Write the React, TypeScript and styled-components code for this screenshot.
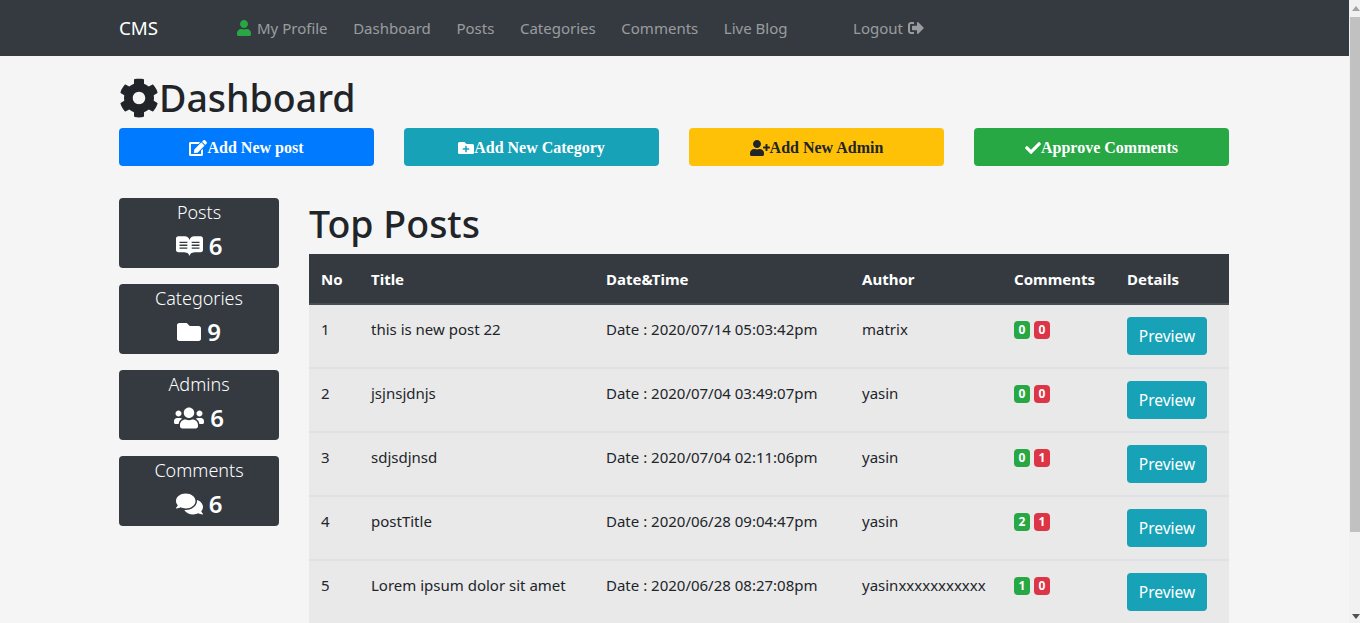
import React from "react";
import styled, { createGlobalStyle } from "styled-components";
import {
  FaCheck,
  FaCog,
  FaComments,
  FaEdit,
  FaFolder,
  FaFolderPlus,
  FaReadme,
  FaSignOutAlt,
  FaUser,
  FaUserPlus,
  FaUsers,
} from "react-icons/fa";

const GlobalStyle = createGlobalStyle`
  body {
    margin: 0;
    padding-right: 11px;
    background: #f5f5f5;
    color: #212529;
    font-family: "Noto Sans", "Open Sans", sans-serif;
    font-size: 15px;
    line-height: 24px;
  }
  svg {
    height: 1em;
    flex: none;
  }
`;

// font awesome glyphs are not square, react-icons squeezes them into 1em
const UserIcon = styled(FaUser)`
  width: 0.875em;
`;
const EditIcon = styled(FaEdit)`
  width: 1.125em;
`;
const UserPlusIcon = styled(FaUserPlus)`
  width: 1.25em;
`;
const BookIcon = styled(FaReadme)`
  width: 1.125em;
`;
const UsersIcon = styled(FaUsers)`
  width: 1.25em;
`;
const CommentsIcon = styled(FaComments)`
  width: 1.125em;
`;

const Navbar = styled.nav`
  background: #343a40;
  height: 56px;
`;

const NavInner = styled.div`
  width: 1110px;
  margin-left: 119px;
  height: 100%;
  display: flex;
  align-items: center;
`;

const Brand = styled.div`
  color: #fff;
  font-size: 18.75px;
  width: 118px;
`;

const NavLink = styled.a`
  color: rgba(255, 255, 255, 0.5);
  margin-right: 25.6px;
  display: flex;
  align-items: center;
  gap: 6px;
  svg {
    font-size: 16px;
  }
`;

const LogoutLink = styled(NavLink)`
  margin-left: 40px;
  gap: 5px;
`;

const Page = styled.main`
  width: 1110px;
  margin: 0 0 24px 119px;
`;

const Heading = styled.h1`
  margin: 18px 0 6px;
  font-size: 37.5px;
  line-height: 48px;
  font-weight: 500;
  display: flex;
  align-items: center;
  svg {
    font-size: 40px;
  }
`;

const ActionGrid = styled.div`
  display: grid;
  grid-template-columns: repeat(4, 255px);
  gap: 30px;
  margin-bottom: 32px;
`;

const ActionButton = styled.a<{ $bg: string; $fg: string }>`
  height: 38px;
  box-sizing: border-box;
  padding-top: 1px;
  border-radius: 4px;
  background: ${(p) => p.$bg};
  color: ${(p) => p.$fg};
  font-family: "Liberation Serif", serif;
  font-size: 16px;
  font-weight: 700;
  display: flex;
  align-items: center;
  justify-content: center;
`;

const Columns = styled.div`
  display: flex;
  gap: 30px;
  align-items: flex-start;
`;

const Sidebar = styled.aside`
  width: 160px;
  flex: none;
  display: flex;
  flex-direction: column;
  gap: 16px;
`;

const StatCard = styled.div`
  height: 70px;
  border-radius: 4px;
  background: #343a40;
  color: #fff;
  text-align: center;
`;

const StatLabel = styled.div`
  font-size: 18px;
  line-height: 29px;
  font-weight: 300;
`;

const StatValue = styled.div`
  font-size: 24px;
  line-height: 38px;
  font-weight: 600;
  display: flex;
  align-items: center;
  justify-content: center;
  gap: 6px;
`;

const Content = styled.section`
  flex: 1;
  min-width: 0;
`;

const SectionTitle = styled.h1`
  margin: 0 0 5px;
  font-size: 37.5px;
  line-height: 51px;
  font-weight: 500;
`;

const Table = styled.table`
  width: 920px;
  table-layout: fixed;
  border-collapse: separate;
  border-spacing: 0;
  background: #e9e9e9;
`;

const Th = styled.th<{ $w: number }>`
  width: ${(p) => p.$w}px;
  background: #343a40;
  color: #fff;
  text-align: left;
  padding: 12px;
  height: 51px;
  box-sizing: border-box;
  font-size: 15px;
  font-weight: 700;
  border-bottom: 2px solid #454d55;
`;

const Td = styled.td`
  padding: 12px;
  height: 64px;
  box-sizing: border-box;
  vertical-align: top;
  border-bottom: 2px solid #dee2e6;
  white-space: nowrap;
`;

const Badge = styled.span<{ $bg: string }>`
  display: inline-block;
  vertical-align: top;
  width: 16px;
  height: 18px;
  margin: 4px 4px 0 0;
  border-radius: 4px;
  background: ${(p) => p.$bg};
  color: #fff;
  font-size: 12px;
  line-height: 18px;
  font-weight: 700;
  text-align: center;
`;

const PreviewButton = styled.a`
  display: block;
  width: 80px;
  height: 38px;
  border-radius: 4px;
  background: #17a2b8;
  color: #fff;
  font-size: 15.5px;
  line-height: 38px;
  text-align: center;
`;

// the browser here draws no scrollbar, the reference has one
const ScrollTrack = styled.div`
  position: fixed;
  top: 0;
  right: 0;
  bottom: 0;
  width: 11px;
  background: #f1f1f1;
  display: flex;
  flex-direction: column;
  align-items: flex-end;
  justify-content: space-between;
`;

const ScrollThumb = styled.div`
  position: absolute;
  top: 17px;
  right: 0;
  width: 10px;
  height: 515px;
  background: #c1c1c1;
`;

const ScrollArrow = styled.svg`
  width: 8px;
  height: 5px;
  margin: 6px 0 4px;
`;

const posts = [
  { id: 1, title: "this is new post 22", date: "2020/07/14 05:03:42pm", author: "matrix", ok: 0, bad: 0 },
  { id: 2, title: "jsjnsjdnjs", date: "2020/07/04 03:49:07pm", author: "yasin", ok: 0, bad: 0 },
  { id: 3, title: "sdjsdjnsd", date: "2020/07/04 02:11:06pm", author: "yasin", ok: 0, bad: 1 },
  { id: 4, title: "postTitle", date: "2020/06/28 09:04:47pm", author: "yasin", ok: 2, bad: 1 },
  { id: 5, title: "Lorem ipsum dolor sit amet", date: "2020/06/28 08:27:08pm", author: "yasinxxxxxxxxxxx", ok: 1, bad: 0 },
];

const stats = [
  { label: "Posts", icon: <BookIcon />, value: 6 },
  { label: "Categories", icon: <FaFolder />, value: 9 },
  { label: "Admins", icon: <UsersIcon />, value: 6 },
  { label: "Comments", icon: <CommentsIcon />, value: 6 },
];

const App: React.FC = () => (
  <>
    <GlobalStyle />
    <Navbar>
      <NavInner>
        <Brand>CMS</Brand>
        <NavLink><UserIcon color="#28a745" />My Profile</NavLink>
        <NavLink>Dashboard</NavLink>
        <NavLink>Posts</NavLink>
        <NavLink>Categories</NavLink>
        <NavLink>Comments</NavLink>
        <NavLink>Live Blog</NavLink>
        <LogoutLink>Logout <FaSignOutAlt /></LogoutLink>
      </NavInner>
    </Navbar>
    <Page>
      <Heading><FaCog />Dashboard</Heading>
      <ActionGrid>
        <ActionButton $bg="#007bff" $fg="#fff"><EditIcon />Add New post</ActionButton>
        <ActionButton $bg="#17a2b8" $fg="#fff"><FaFolderPlus />Add New Category</ActionButton>
        <ActionButton $bg="#ffc107" $fg="#212529"><UserPlusIcon />Add New Admin</ActionButton>
        <ActionButton $bg="#28a745" $fg="#fff"><FaCheck />Approve Comments</ActionButton>
      </ActionGrid>
      <Columns>
        <Sidebar>
          {stats.map((s) => (
            <StatCard key={s.label}>
              <StatLabel>{s.label}</StatLabel>
              <StatValue>{s.icon}{s.value}</StatValue>
            </StatCard>
          ))}
        </Sidebar>
        <Content>
          <SectionTitle>Top Posts</SectionTitle>
          <Table>
            <thead>
              <tr>
                <Th $w={50}>No</Th>
                <Th $w={235}>Title</Th>
                <Th $w={256}>Date&amp;Time</Th>
                <Th $w={152}>Author</Th>
                <Th $w={113}>Comments</Th>
                <Th $w={114}>Details</Th>
              </tr>
            </thead>
            <tbody>
              {posts.map((p) => (
                <tr key={p.id}>
                  <Td>{p.id}</Td>
                  <Td>{p.title}</Td>
                  <Td>Date : {p.date}</Td>
                  <Td>{p.author}</Td>
                  <Td>
                    <Badge $bg="#28a745">{p.ok}</Badge>
                    <Badge $bg="#dc3545">{p.bad}</Badge>
                  </Td>
                  <Td><PreviewButton>Preview</PreviewButton></Td>
                </tr>
              ))}
            </tbody>
          </Table>
        </Content>
      </Columns>
    </Page>
    <ScrollTrack>
      <ScrollArrow viewBox="0 0 8 5"><path d="M4 0L8 5H0Z" fill="#a3a3a3" /></ScrollArrow>
      <ScrollThumb />
      <ScrollArrow viewBox="0 0 8 5"><path d="M0 0H8L4 5Z" fill="#505050" /></ScrollArrow>
    </ScrollTrack>
  </>
);

export default App;
